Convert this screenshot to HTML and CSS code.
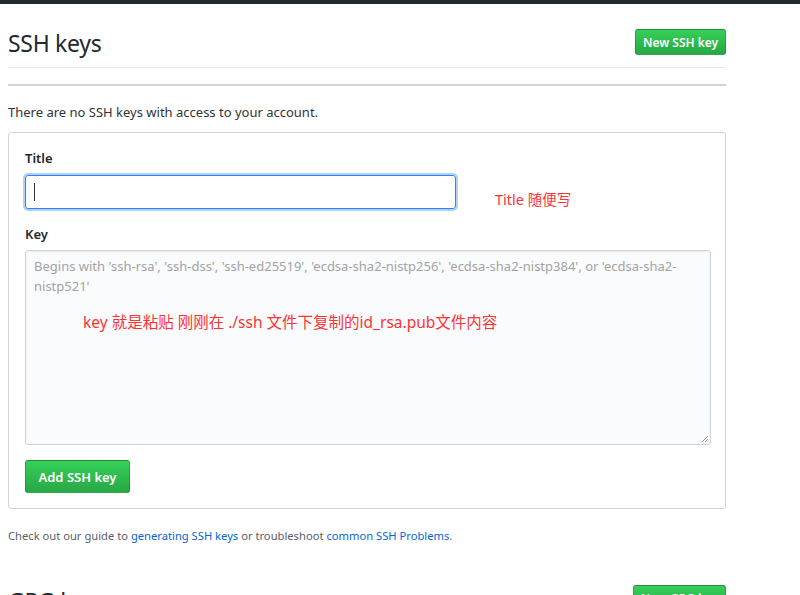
FILE: index.html
```html
<!DOCTYPE html>
<html lang="en">
<head>
<meta charset="utf-8">
<title>SSH keys</title>
<link rel="stylesheet" href="styles.css">
</head>
<body>
<div class="topbar"></div>
<main class="page">
  <div class="subhead">
    <h2 class="subhead-title">SSH keys</h2>
    <button class="btn btn-sm">New SSH key</button>
  </div>
  <div class="rule"></div>
  <p class="blank">There are no SSH keys with access to your account.</p>
  <form class="box">
    <label class="label" for="t">Title</label>
    <div class="title-row">
      <div class="input"><span class="caret"></span></div>
      <span class="note note-title">Title 随便写</span>
    </div>
    <label class="label key-label" for="k">Key</label>
    <div class="textarea">
      <p class="placeholder">Begins with 'ssh-rsa', 'ssh-dss', 'ssh-ed25519', 'ecdsa-sha2-nistp256', 'ecdsa-sha2-nistp384', or 'ecdsa-sha2-nistp521'</p>
      <p class="note note-key">key 就是粘贴 刚刚在 ./ssh 文件下复制的id_rsa.pub文件内容</p>
      <svg class="grip" width="8" height="8" viewBox="0 0 8 8"><path d="M7 1 L1 7 M7 4 L4 7" stroke="#999" stroke-width="1" fill="none"/></svg>
    </div>
    <button type="button" class="btn btn-add">Add SSH key</button>
  </form>
  <p class="help">Check out our guide to <a href="#">generating SSH keys</a> or troubleshoot <a href="#">common SSH Problems</a>.</p>
  <div class="subhead subhead-gpg">
    <h2 class="subhead-title">GPG keys</h2>
    <button class="btn btn-sm btn-gpg">New GPG key</button>
  </div>
</main>
</body>
</html>
```

FILE: styles.css
```css
html, body {
  margin: 0;
  padding: 0;
  background: #fff;
  overflow: hidden;
}
body {
  font-family: "Noto Sans", "Noto Sans CJK SC", sans-serif;
  color: #24292e;
  font-size: 13px;
}
.topbar {
  height: 4px;
  background: #24292e;
}
.page {
  width: 718px;
  padding-left: 8px;
}
.subhead {
  display: flex;
  justify-content: space-between;
  align-items: center;
  padding-top: 25px;
  padding-bottom: 12px;
  height: 26px;
  border-bottom: 1px solid #e8e8e8;
}
.subhead-title {
  margin: 2px 0 0;
  font-weight: 400;
  font-size: 23px;
  line-height: 26px;
  color: #24292e;
  letter-spacing: -0.3px;
}
.btn {
  font-family: inherit;
  color: #fff;
  font-weight: 600;
  border: 1px solid rgba(27,31,35,0.2);
  border-radius: 3px;
  background: linear-gradient(#34d058, #28a745);
  cursor: pointer;
}
.btn-sm {
  height: 26px;
  width: 91px;
  font-size: 12px;
  padding: 0;
}
.rule {
  margin-top: 16px;
  height: 2px;
  background: #d1d5da;
}
.blank {
  margin: 16px 0 0;
  font-size: 13px;
  line-height: 20px;
  color: #333;
}
.box {
  margin-top: 10px;
  border: 1px solid #d1d5da;
  border-radius: 3px;
  padding: 16px 16px 15px;
  display: flex;
  flex-direction: column;
  align-items: flex-start;
}
.label {
  font-weight: 600;
  font-size: 13px;
  line-height: 18px;
}
.title-row {
  margin-top: 7px;
  display: flex;
  align-items: center;
}
.input {
  box-sizing: border-box;
  width: 431px;
  height: 34px;
  border: 1px solid #2188ff;
  border-radius: 3px;
  box-shadow: 0 0 0 2px rgba(3,102,214,0.3);
  display: flex;
  align-items: center;
  padding-left: 8px;
}
.caret {
  width: 1px;
  height: 18px;
  background: #333;
}
.note {
  color: #ff3333;
  font-family: "Noto Sans", "Noto Sans CJK SC", sans-serif;
}
.note-title {
  font-size: 14.5px;
  margin-left: 39px;
  margin-top: 14px;
}
.key-label {
  margin-top: 16px;
}
.textarea {
  box-sizing: border-box;
  position: relative;
  margin-top: 7px;
  width: 686px;
  height: 195px;
  border: 1px solid #d1d5da;
  border-radius: 3px;
  background: #fafbfc;
  box-shadow: inset 0 1px 2px rgba(27,31,35,0.075);
}
.placeholder {
  margin: 5px 8px 0;
  color: #a3a3a3;
  font-size: 13px;
  line-height: 20px;
}
.note-key {
  font-size: 15.5px;
  line-height: 22px;
  margin: 15px 0 0 57px;
}
.grip {
  position: absolute;
  right: 1px;
  bottom: 1px;
}
.btn-add {
  margin-top: 15px;
  width: 105px;
  height: 33px;
  font-size: 13px;
  padding: 0;
}
.help {
  margin: 18px 0 0;
  font-size: 11.2px;
  line-height: 17px;
  color: #586069;
}
.help a {
  color: #0366d6;
  text-decoration: none;
}
.subhead-gpg {
  margin-top: 16px;
  border-bottom: none;
}
.subhead-gpg .subhead-title {
  margin-top: 6px;
}
.btn-gpg {
  width: 93px;
}
```
